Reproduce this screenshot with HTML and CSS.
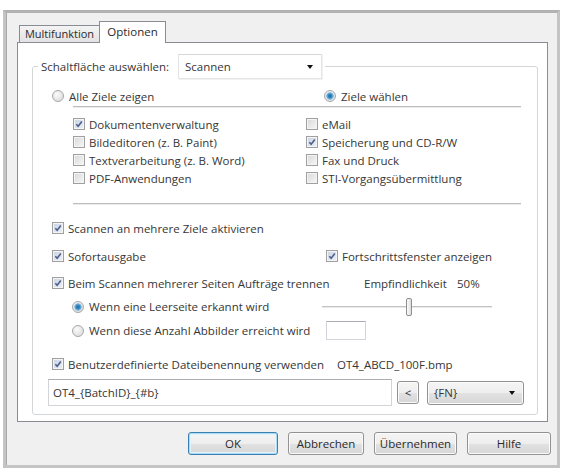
FILE: index.html
```html
<!DOCTYPE html>
<html lang="de">
<head>
    <meta charset="UTF-8">
    <title>Optionen</title>
    <link rel="stylesheet" href="styles.css">
</head>
<body>
    <div class="window">
        <div class="tabs">
            <div class="tab tab-multi">Multifunktion</div>
            <div class="tab tab-options active">Optionen</div>
        </div>

        <div class="panel">
            <fieldset class="group">
                <legend class="group-title">
                    <span class="group-label">Schaltfläche auswählen:</span>
                    <span class="combo combo-flat">Scannen<span class="arrow"></span></span>
                </legend>

                <div class="row radios">
                    <label class="opt opt-all"><span class="radio"></span>Alle Ziele zeigen</label>
                    <label class="opt"><span class="radio on"></span>Ziele wählen</label>
                </div>

                <div class="sep"></div>

                <div class="targets">
                    <label class="opt"><span class="check on"><svg viewBox="0 0 12 12"><path d="M2.8 6.2 L5 8.8 L9.4 3"/></svg></span>Dokumentenverwaltung</label>
                    <label class="opt"><span class="check"></span>eMail</label>
                    <label class="opt"><span class="check"></span>Bildeditoren (z. B. Paint)</label>
                    <label class="opt"><span class="check on"><svg viewBox="0 0 12 12"><path d="M2.8 6.2 L5 8.8 L9.4 3"/></svg></span>Speicherung und CD-R/W</label>
                    <label class="opt"><span class="check"></span>Textverarbeitung (z. B. Word)</label>
                    <label class="opt"><span class="check"></span>Fax und Druck</label>
                    <label class="opt"><span class="check"></span>PDF-Anwendungen</label>
                    <label class="opt"><span class="check"></span>STI-Vorgangsübermittlung</label>
                </div>

                <div class="sep sep-lower"></div>

                <div class="row r-multi">
                    <label class="opt"><span class="check on"><svg viewBox="0 0 12 12"><path d="M2.8 6.2 L5 8.8 L9.4 3"/></svg></span>Scannen an mehrere Ziele aktivieren</label>
                </div>

                <div class="row r-instant">
                    <label class="opt opt-instant"><span class="check on"><svg viewBox="0 0 12 12"><path d="M2.8 6.2 L5 8.8 L9.4 3"/></svg></span>Sofortausgabe</label>
                    <label class="opt"><span class="check on"><svg viewBox="0 0 12 12"><path d="M2.8 6.2 L5 8.8 L9.4 3"/></svg></span>Fortschrittsfenster anzeigen</label>
                </div>

                <div class="row r-split">
                    <label class="opt opt-split"><span class="check on"><svg viewBox="0 0 12 12"><path d="M2.8 6.2 L5 8.8 L9.4 3"/></svg></span>Beim Scannen mehrerer Seiten Aufträge trennen</label>
                    <span class="sens">Empfindlichkeit</span>
                    <span>50%</span>
                </div>

                <div class="row r-blank">
                    <label class="opt opt-blank"><span class="radio on"></span>Wenn eine Leerseite erkannt wird</label>
                    <div class="slider"><span class="thumb"></span></div>
                </div>

                <div class="row r-count">
                    <label class="opt opt-count"><span class="radio"></span>Wenn diese Anzahl Abbilder erreicht wird</label>
                    <span class="field num"></span>
                </div>

                <div class="row r-naming">
                    <label class="opt opt-naming"><span class="check on"><svg viewBox="0 0 12 12"><path d="M2.8 6.2 L5 8.8 L9.4 3"/></svg></span>Benutzerdefinierte Dateibenennung verwenden</label>
                    <span>OT4_ABCD_100F.bmp</span>
                </div>

                <div class="row r-pattern">
                    <span class="field pattern">OT4_{BatchID}_{#b}</span>
                    <span class="btn btn-insert">&lt;</span>
                    <span class="combo combo-btn">{FN}<span class="arrow"></span></span>
                </div>
            </fieldset>
        </div>

        <div class="buttons">
            <button class="btn btn-ok">OK</button>
            <button class="btn btn-cancel">Abbrechen</button>
            <button class="btn btn-apply">Übernehmen</button>
            <button class="btn btn-help">Hilfe</button>
        </div>
    </div>
</body>
</html>
```

FILE: styles.css
```css
* {
    margin: 0;
    padding: 0;
    box-sizing: border-box;
}

body {
    background: #fff;
    font-family: "Open Sans", "Segoe UI", sans-serif;
    font-size: 11.5px;
    color: #363636;
}

.window {
    margin: 10px 0 0 3px;
    width: 557px;
    height: 458px;
    border: 3px solid #c4c4c4;
    border-top-color: #b2b2b2;
    box-shadow: inset 1px 0 0 #a9a9a9;
    background: #f0f0f0;
    padding: 8px 9px 0 11px;
}

/* tab strip */
.tabs {
    display: flex;
    align-items: flex-end;
    height: 21px;
    padding-left: 2px;
}

.tab {
    height: 17px;
    border: 1px solid #898c95;
    border-bottom: none;
    background: linear-gradient(#f4f4f4, #e2e2e2);
    line-height: 15px;
    text-align: center;
    font-size: 11px;
    color: #2a2a2a;
}

.tab-multi {
    width: 81px;
}

.tab-options {
    width: 67px;
    margin-left: -1px;
}

.tab.active {
    height: 22px;
    margin-bottom: -1px;
    line-height: 20px;
    font-size: 11.5px;
    background: #fff;
    position: relative;
    z-index: 1;
}

.panel {
    height: 380px;
    border: 1px solid #898c95;
    background: #fff;
    padding: 11px 9px 0 14px;
}

/* group box */
.group {
    height: 361px;
    border: 1px solid #d3d6d9;
    border-radius: 3px;
}

.group-title {
    display: flex;
    align-items: center;
    height: 25px;
    margin-left: 5px;
    padding: 0 3px;
}

.group-label {
    width: 135px;
}

.combo {
    position: relative;
    display: block;
    padding-left: 6px;
}

.combo-flat {
    width: 144px;
    height: 25px;
    line-height: 23px;
    margin-left: 2px;
    background: #fff;
    border: 1px solid #e4e4e4;
    border-top-color: #d6d6d6;
    box-shadow: 1px 1px 0 #f2f2f2;
}

.arrow {
    position: absolute;
    right: 8px;
    top: 50%;
    margin-top: -2px;
    border-left: 3.5px solid transparent;
    border-right: 3.5px solid transparent;
    border-top: 4px solid #111;
}

.row {
    display: flex;
    align-items: center;
    height: 18px;
}

.opt {
    display: flex;
    align-items: center;
    white-space: nowrap;
}

/* check boxes and radio buttons */
.check {
    width: 12px;
    height: 12px;
    margin-right: 4px;
    border: 1px solid #a0a0a0;
    background: linear-gradient(135deg, #d8d8d8, #f7f7f7);
    box-shadow: inset 0 0 0 1px #f4f4f4;
    flex-shrink: 0;
}

.check.on {
    background: linear-gradient(135deg, #c9d2e2, #eef1f7);
}

.check svg {
    display: block;
    width: 10px;
    height: 10px;
}

.check path {
    fill: none;
    stroke: #4c5f8c;
    stroke-width: 1.9;
}

.radio {
    width: 12px;
    height: 12px;
    margin-right: 5px;
    border-radius: 50%;
    border: 1px solid #a8a8a8;
    background: radial-gradient(circle at 40% 35%, #fbfbfb, #d6d6d6);
    flex-shrink: 0;
}

.radio.on {
    background:
        radial-gradient(circle, #1f6392 0, #3b8cc4 2px, #8cc4e6 3.5px, transparent 4px),
        radial-gradient(circle at 40% 35%, #fbfbfb, #d6d6d6);
}

.radios {
    margin-top: 9px;
    height: 16px;
    padding-left: 19px;
}

.opt-all {
    width: 272px;
}

.sep {
    margin: 2px 16px 0 40px;
    border-top: 1px solid #bdbdbd;
    border-bottom: 1px solid #ececec;
}

.sep-lower {
    margin-top: 16px;
}

.targets {
    display: grid;
    grid-template-columns: 233px 1fr;
    grid-auto-rows: 18px;
    margin: 7px 0 0 40px;
}

.r-multi,
.r-instant,
.r-split,
.r-naming {
    padding-left: 19px;
}

.r-multi {
    margin-top: 14px;
}

.r-instant {
    margin-top: 10px;
}

.opt-instant {
    width: 274px;
}

.r-split {
    margin-top: 9px;
}

.opt-split {
    width: 312px;
}

.sens {
    width: 93px;
}

.r-blank,
.r-count {
    padding-left: 39px;
}

.r-blank {
    margin-top: 5px;
    height: 19px;
}

.opt-blank {
    width: 250px;
}

.slider {
    position: relative;
    width: 170px;
    height: 19px;
    background: linear-gradient(transparent 9px, #c3c3c3 9px, #c3c3c3 10px, #eaeaea 10px, #eaeaea 11px, transparent 11px);
}

.thumb {
    position: absolute;
    left: 84px;
    top: 1px;
    width: 6px;
    height: 18px;
    border: 1px solid #8e8e8e;
    border-radius: 2px;
    background: linear-gradient(90deg, #fdfdfd, #dcdcdc);
}

.r-count {
    margin-top: 5px;
    height: 19px;
}

.opt-count {
    width: 254px;
}

.field {
    display: block;
    background: #fff;
    border: 1px solid #d2d4da;
    border-top-color: #abadb3;
}

.num {
    width: 40px;
    height: 19px;
}

.r-naming {
    margin-top: 15px;
}

.opt-naming {
    width: 285px;
}

.r-pattern {
    margin-top: 6px;
    height: 27px;
    padding-left: 15px;
}

.pattern {
    width: 344px;
    height: 27px;
    line-height: 25px;
    padding-left: 4px;
}

/* push buttons */
.btn {
    display: block;
    height: 23px;
    border: 1px solid #929292;
    border-radius: 3px;
    background: linear-gradient(#f5f5f5 0%, #eeeeee 50%, #e2e2e2 51%, #d6d6d6 100%);
    box-shadow: inset 0 0 0 1px #fbfbfb;
    font-family: inherit;
    font-size: inherit;
    color: #2a2a2a;
    text-align: center;
}

.btn-insert {
    width: 22px;
    margin-left: 5px;
    line-height: 21px;
}

.combo-btn {
    width: 97px;
    height: 24px;
    margin-left: 8px;
    line-height: 22px;
    border: 1px solid #929292;
    border-radius: 3px;
    background: linear-gradient(#f5f5f5 0%, #eeeeee 50%, #e2e2e2 51%, #d6d6d6 100%);
    box-shadow: inset 0 0 0 1px #fbfbfb;
}

.buttons {
    display: flex;
    justify-content: flex-end;
    gap: 10px;
    margin: 10px -3px 0 0;
}

.btn-ok {
    width: 90px;
    border-color: #3c7fb1;
    box-shadow: inset 0 0 0 1px #a9dcf4, inset 0 0 0 2px #e2f3fb;
}

.btn-cancel {
    width: 76px;
}

.btn-apply {
    width: 83px;
}

.btn-help {
    width: 84px;
}
```
